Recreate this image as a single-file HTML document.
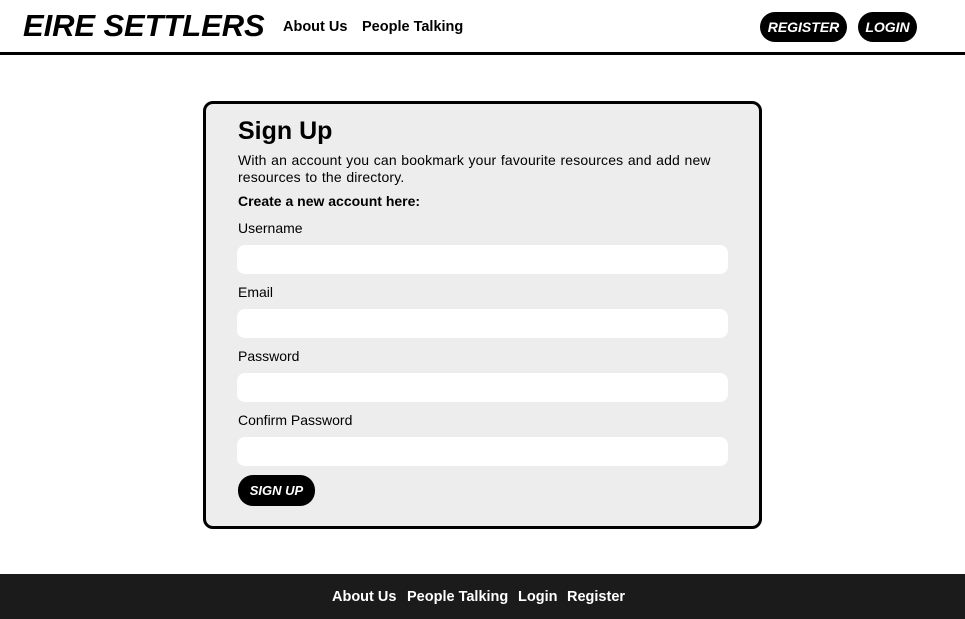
<!DOCTYPE html>
<html><head><style>
*{box-sizing:border-box;margin:0;padding:0}
body{width:965px;height:619px;position:relative;background:#fff;font-family:"Liberation Sans",Arial,sans-serif;color:#000;overflow:hidden}
.hdr{position:absolute;left:0;top:0;width:965px;height:55px;border-bottom:3px solid #000}
.logo{position:absolute;left:23px;top:8px;font-size:31px;font-weight:bold;font-style:italic;letter-spacing:-0.1px}
.nav{position:absolute;top:19px;font-size:14.5px;font-weight:bold}
.btn{position:absolute;top:12px;height:30px;background:#000;color:#fff;border-radius:15px;font-size:14px;font-weight:bold;font-style:italic;line-height:30px;text-align:center}
.card{position:absolute;left:203px;top:101px;width:559px;height:428px;border:3px solid #000;border-radius:10px;background:#ededed}
.t{position:absolute;left:32px}
.in{position:absolute;left:31px;width:491px;height:29px;background:#fff;border-radius:8px}
.lbl{font-size:14px}
.foot{position:absolute;left:0;top:574px;width:965px;height:45px;background:#1b1b1b;color:#fff;font-size:14.5px;font-weight:bold}
.foot span{position:absolute;top:15px}
</style></head><body>
<div class="hdr">
<div class="logo">EIRE SETTLERS</div>
<div class="nav" style="left:283px">About Us</div>
<div class="nav" style="left:362px">People Talking</div>
<div class="btn" style="left:760px;width:87px">REGISTER</div>
<div class="btn" style="left:858px;width:59px">LOGIN</div>
</div>
<div class="card">
<div class="t" style="top:13px;font-size:25px;font-weight:bold">Sign Up</div>
<div class="t" style="top:48px;font-size:14px;line-height:17px;width:500px;letter-spacing:0.15px;word-spacing:0.5px">With an account you can bookmark your favourite resources and add new resources to the directory.</div>
<div class="t" style="top:89px;font-size:14px;font-weight:bold">Create a new account here:</div>
<div class="t lbl" style="top:116px">Username</div>
<div class="in" style="top:141px"></div>
<div class="t lbl" style="top:180px">Email</div>
<div class="in" style="top:205px"></div>
<div class="t lbl" style="top:244px">Password</div>
<div class="in" style="top:269px"></div>
<div class="t lbl" style="top:308px">Confirm Password</div>
<div class="in" style="top:333px"></div>
<div class="btn" style="left:32px;top:371px;width:77px;height:31px;line-height:31px;font-size:13px">SIGN UP</div>
</div>
<div class="foot">
<span style="left:332px">About Us</span>
<span style="left:407px">People Talking</span>
<span style="left:518px">Login</span>
<span style="left:567px">Register</span>
</div>
</body></html>
